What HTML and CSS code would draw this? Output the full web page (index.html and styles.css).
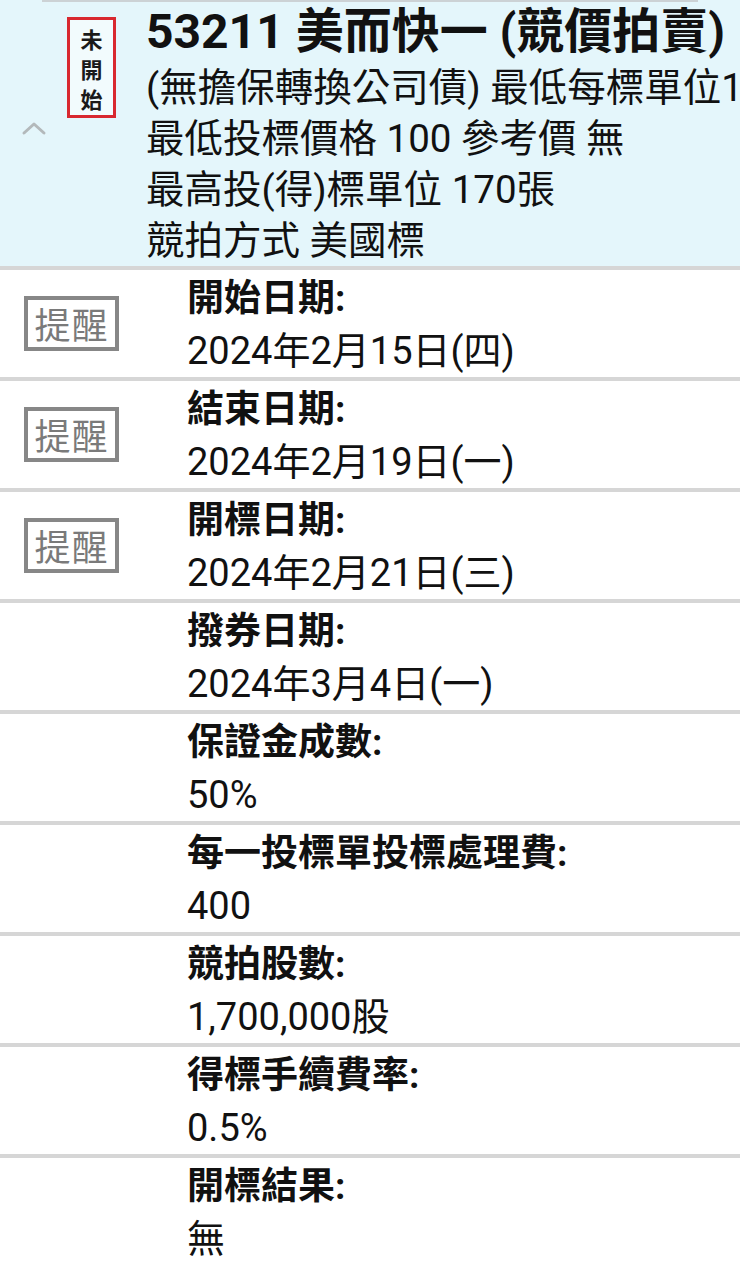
FILE: index.html
```html
<!DOCTYPE html>
<html lang="zh-Hant">
<head>
<meta charset="utf-8">
<link rel="stylesheet" href="styles.css">
</head>
<body>
<div class="page">
  <header class="head">
    <div class="strip"></div>
    <div class="head-main">
      <div class="head-left">
        <svg class="chev" width="26" height="16" viewBox="0 0 26 16"><path d="M3 13 L13 4 L23 13" fill="none" stroke="#b3b9bb" stroke-width="3" stroke-linecap="round" stroke-linejoin="round"/></svg>
        <div class="status"><span>未</span><span>開</span><span>始</span></div>
      </div>
      <div class="head-text">
        <div class="title">53211 美而快一 (競價拍賣)</div>
        <div class="sub">(無擔保轉換公司債) 最低每標單位1</div>
        <div class="sub">最低投標價格 100 參考價 無</div>
        <div class="sub">最高投(得)標單位 170張</div>
        <div class="sub">競拍方式 美國標</div>
      </div>
    </div>
  </header>

  <div class="row">
    <div class="row-left"><div class="remind">提醒</div></div>
    <div class="row-text"><div class="label">開始日期:</div><div class="value">2024年2月15日(四)</div></div>
  </div>
  <div class="row">
    <div class="row-left"><div class="remind">提醒</div></div>
    <div class="row-text"><div class="label">結束日期:</div><div class="value">2024年2月19日(一)</div></div>
  </div>
  <div class="row">
    <div class="row-left"><div class="remind">提醒</div></div>
    <div class="row-text"><div class="label">開標日期:</div><div class="value">2024年2月21日(三)</div></div>
  </div>
  <div class="row">
    <div class="row-left"></div>
    <div class="row-text"><div class="label">撥券日期:</div><div class="value">2024年3月4日(一)</div></div>
  </div>
  <div class="row">
    <div class="row-left"></div>
    <div class="row-text"><div class="label">保證金成數:</div><div class="value">50%</div></div>
  </div>
  <div class="row">
    <div class="row-left"></div>
    <div class="row-text"><div class="label">每一投標單投標處理費:</div><div class="value">400</div></div>
  </div>
  <div class="row">
    <div class="row-left"></div>
    <div class="row-text"><div class="label">競拍股數:</div><div class="value">1,700,000股</div></div>
  </div>
  <div class="row">
    <div class="row-left"></div>
    <div class="row-text"><div class="label">得標手續費率:</div><div class="value">0.5%</div></div>
  </div>
  <div class="row">
    <div class="row-left"></div>
    <div class="row-text"><div class="label">開標結果:</div><div class="value">無</div></div>
  </div>
</div>
</body>
</html>
```
FILE: styles.css
```css
html, body {
  margin: 0;
  padding: 0;
  background: #ffffff;
}
body {
  font-family: Roboto, "Noto Sans CJK TC", sans-serif;
  color: #111111;
  width: 740px;
  overflow: hidden;
}
.page {
  width: 740px;
}
.head {
  background: #e4f6fb;
  height: 266px;
  border-bottom: 4px solid #d6d6d6;
  overflow: hidden;
}
.strip {
  height: 2px;
  margin: 0 42px;
  background: #ccd2d5;
}
.head-main {
  display: flex;
}
.head-left {
  width: 146px;
  flex: none;
  display: flex;
  align-items: flex-start;
  height: 264px;
}
.chev {
  margin-left: 21px;
  margin-top: 118px;
  flex: none;
}
.status {
  margin-left: 20px;
  margin-top: 15px;
  width: 43px;
  height: 95px;
  border: 3px solid #d8282f;
  background: #f2fbfd;
  display: flex;
  flex-direction: column;
  align-items: center;
  justify-content: center;
  font-family: "Noto Sans CJK TC", sans-serif;
  font-weight: 700;
  font-size: 22px;
  line-height: 30px;
  color: #1a1a1a;
}
.status span {
  display: block;
  height: 30px;
}
.head-text {
  flex: 1;
  min-width: 0;
  white-space: nowrap;
}
.title {
  font-size: 48px;
  font-weight: 700;
  line-height: 60px;
}
.sub {
  font-size: 38.5px;
  line-height: 51px;
}
.row {
  display: flex;
  height: 107px;
  border-bottom: 4px solid #d6d6d6;
  overflow: hidden;
}
.row-left {
  width: 187px;
  flex: none;
  display: flex;
  align-items: center;
}
.remind {
  margin-left: 24px;
  width: 87px;
  height: 47px;
  border: 4px solid #878787;
  background: #ffffff;
  color: #7a7a7a;
  font-family: "Noto Sans CJK TC", serif;
  font-size: 36px;
  line-height: 47px;
  text-align: center;
  letter-spacing: 1px;
}
.row-text {
  padding-top: 3px;
  white-space: nowrap;
}
.label {
  font-size: 37px;
  font-weight: 700;
  line-height: 52px;
}
.value {
  font-size: 38px;
  line-height: 52px;
}
```
